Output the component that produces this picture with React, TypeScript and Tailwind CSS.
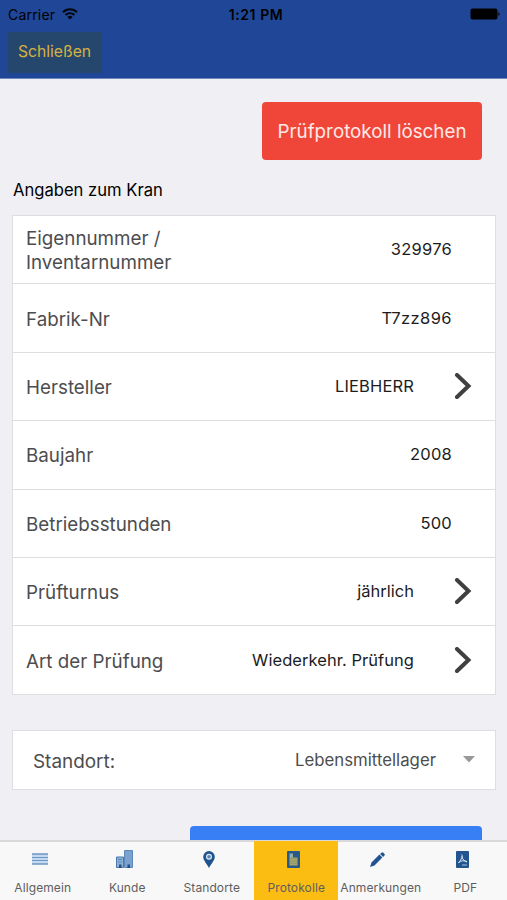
import type { ReactNode } from "react";

type Row = {
  label: string;
  value: string;
  link?: boolean;
  valueClass: string;
};

const ROWS: Row[] = [
  { label: "Eigennummer / Inventarnummer", value: "329976", valueClass: "tracking-[0.25px]" },
  { label: "Fabrik-Nr", value: "T7zz896", valueClass: "tracking-[0.4px]" },
  { label: "Hersteller", value: "LIEBHERR", link: true, valueClass: "tracking-[0.15px]" },
  { label: "Baujahr", value: "2008", valueClass: "tracking-[0.25px]" },
  { label: "Betriebsstunden", value: "500", valueClass: "tracking-[0.25px]" },
  { label: "Prüfturnus", value: "jährlich", link: true, valueClass: "tracking-normal" },
  { label: "Art der Prüfung", value: "Wiederkehr. Prüfung", link: true, valueClass: "tracking-[0.05px]" },
];

export default function App() {
  return (
    <div className="h-[900px] w-[507px] flex flex-col overflow-hidden bg-[#efeff4] font-['Inter',sans-serif] text-black">
      <header className="h-[79px] shrink-0 bg-[#204797] border-b border-[#6f88bd]">
        <div className="grid grid-cols-3 items-center h-7 pl-2 pr-[7px] text-[14px]">
          <div className="flex items-center gap-[7px]">
            <span className="tracking-[0.2px]">Carrier</span>
            <WifiIcon />
          </div>
          <span className="text-center font-semibold tracking-[0.6px] pl-1">1:21 PM</span>
          <div className="flex justify-end">
            <BatteryIcon />
          </div>
        </div>
        <button className="block ml-2 mt-1 h-[41px] w-[94px] bg-[#25476e] text-[#d8b23f] text-[15.7px] pb-0.5 pr-px">
          Schließen
        </button>
      </header>

      <main className="flex-1 min-h-0 overflow-hidden flex flex-col">
        <button className="self-end mr-[25px] mt-[23px] pt-0.5 h-[58px] w-[220px] shrink-0 rounded-[4px] bg-[#f0463a] text-[#ffe9e6] text-[18.8px]">
          Prüfprotokoll löschen
        </button>

        <h2 className="ml-[13px] mt-[18px] h-6 leading-6 shrink-0 text-[16.6px]">Angaben zum Kran</h2>

        <section className="ml-3 mr-[11px] mt-[13px] shrink-0 bg-white border-x border-t border-[#dedee1]">
          {ROWS.map((row) => (
            <FieldRow key={row.label} {...row} />
          ))}
        </section>

        <section className="ml-3 mr-[11px] mt-[35px] h-[60px] shrink-0 flex items-center bg-white border border-[#dedee1] pl-5 pr-5">
          <span className="text-[18.9px] text-[#4d4d4f] pt-1">Standort:</span>
          <span className="ml-auto pt-px text-[16.8px] text-[#4d4d4f]">Lebensmittellager</span>
          <svg className="ml-[27px]" width="12" height="7" viewBox="0 0 12 7">
            <path d="M0 0h12L6 6.5z" fill="#999" />
          </svg>
        </section>

        {/* Primary button, scrolled partly under the tab bar */}
        <button className="self-end mr-[25px] mt-[36px] h-[58px] w-[292px] shrink-0 rounded-[4px] bg-[#387ef5]" />
      </main>

      <nav className="h-[60px] shrink-0 grid grid-cols-6 bg-[#f8f8f8] border-t-2 border-[#d9d9dc]">
        <Tab label="Allgemein" icon={<ListIcon />} />
        <Tab label="Kunde" icon={<BuildingsIcon />} />
        <Tab label="Standorte" icon={<PinIcon />} />
        <Tab label="Protokolle" icon={<ReportIcon />} active />
        <Tab label="Anmerkungen" icon={<PencilIcon />} />
        <Tab label="PDF" icon={<PdfIcon />} />
      </nav>
    </div>
  );
}

function FieldRow({ label, value, link, valueClass }: Row) {
  return (
    <div className="h-[68.4px] flex items-center border-b border-[#dedee1] pl-[13px]">
      <span className="w-[170px] text-[18.8px] leading-[24px] text-[#4d4d4f] pt-[3px]">{label}</span>
      <span className={`ml-auto text-[16.5px] text-[#1c1c1e] ${link ? "mr-[40px]" : "mr-[43px]"} ${valueClass}`}>{value}</span>
      {link && (
        <svg className="mr-[23px] mb-px" width="18" height="26" viewBox="0 0 18 26">
          <path d="M3 2L14.5 13L3 24" fill="none" stroke="#404042" strokeWidth="4" strokeLinecap="round" />
        </svg>
      )}
    </div>
  );
}

function Tab({ label, icon, active }: { label: string; icon: ReactNode; active?: boolean }) {
  return (
    <div className={`flex flex-col items-center text-[12px] text-[#5e5e60] ${active ? "bg-[#fcbd13] -mt-px pt-2" : "pt-[7px]"}`}>
      <div className="h-5 flex items-center pr-[5px]">{icon}</div>
      <span className="mt-[11px] pl-px leading-4 whitespace-nowrap tracking-[0.1px]">{label}</span>
    </div>
  );
}

function WifiIcon() {
  return (
    <svg width="16" height="12" viewBox="0 0 16 12" fill="none" stroke="#04070f" strokeWidth="2">
      <path d="M1 4.2C5 .3 11 .3 15 4.2" />
      <path d="M3.5 7C6.2 4.5 9.8 4.5 12.5 7" />
      <path d="M8 11.5L5.4 8.9C7 7.5 9 7.5 10.6 8.9z" fill="#04070f" stroke="none" />
    </svg>
  );
}

function BatteryIcon() {
  return (
    <svg width="30" height="12" viewBox="0 0 30 12">
      <rect x="0.5" y="0.5" width="27" height="11" rx="2" />
      <path d="M28.3 4.2c1.8.6 1.8 3 0 3.6z" />
    </svg>
  );
}

function ListIcon() {
  return (
    <svg width="16" height="12" viewBox="0 0 16 12">
      <path d="M0 .5h16v11H0z" fill="#c3d9f2" />
      <path d="M0 1h16M0 11h16" stroke="#4474a8" strokeWidth="1.1" />
      <path d="M0 4.5h16M0 7.5h16" stroke="#7197c0" />
    </svg>
  );
}

function BuildingsIcon() {
  return (
    <svg width="17" height="18" viewBox="0 0 17 18">
      <path d="M8.5.5h8v17h-8z" fill="#7ba2cf" stroke="#5c88ba" />
      <path d="M.5 7h7v10.5h-7z" fill="#8fb1d3" stroke="#4a79ae" />
      <path d="M2 9.5h4M2 12h4" stroke="#5c88ba" />
      <path d="M3 14.5h2.5V18H3zM11.5 14.5H14V18h-2.5z" fill="#234f86" />
    </svg>
  );
}

function PinIcon() {
  return (
    <svg width="12" height="17" viewBox="0 0 12 17">
      <path d="M6 0a5.8 5.8 0 0 0-5.8 5.8C.2 9.5 4 13 6 17c2-4 5.8-7.5 5.8-11.2A5.8 5.8 0 0 0 6 0z" fill="#20548f" />
      <circle cx="6" cy="5.8" r="2.4" fill="#5b83b1" stroke="#dce9f5" strokeWidth="1.2" />
    </svg>
  );
}

function ReportIcon() {
  return (
    <svg width="13" height="17" viewBox="0 0 13 17">
      <rect width="13" height="17" rx="1" fill="#27598b" />
      <path d="M2.5 2.5H6v4h4.500v8h-8z" fill="#a9a66c" />
      <path d="M3 3h2.5v3H3z" fill="#86acd0" />
      <path d="M2.5 7.5h8M2.5 10h8M2.5 12.2h8" stroke="#7d8f70" strokeWidth=".6" />
    </svg>
  );
}

function PencilIcon() {
  return (
    <svg width="15" height="15" viewBox="0 0 15 15" fill="#215491">
      <path d="M0 15l1.5-4.6L9.4 2.5l3 3-7.900 7.900z" />
      <path d="M10.100 1.900L12 .2c.6-.5 3.300 2.200 2.900 2.800L13.100 4.900z" />
    </svg>
  );
}

function PdfIcon() {
  return (
    <svg width="13" height="17" viewBox="0 0 13 17">
      <rect width="13" height="17" rx="1" fill="#225590" />
      <path d="M5.5 3.5c1.500 0 .5 4.500-3 8.500M6 5c0 3 2.500 5.500 5 6M2.500 11.500C5 9.500 8 9.300 11 10.500" fill="none" stroke="#dce8f3" />
      <path d="M6 14h5" stroke="#a9c2dc" />
    </svg>
  );
}
